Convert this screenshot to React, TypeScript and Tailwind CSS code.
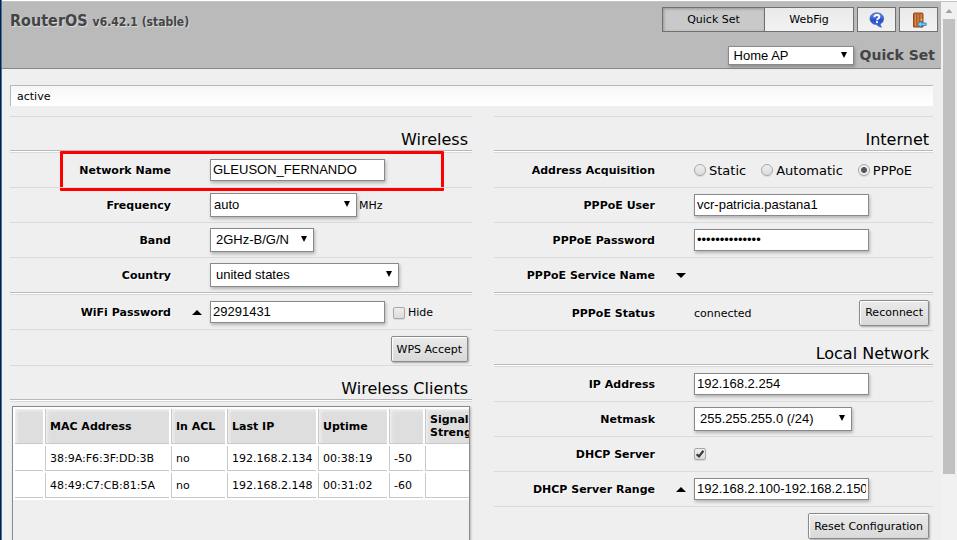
import type { ReactNode } from "react";

const inputClass =
  "h-[22px] w-[175px] shrink-0 border border-[#8a8a8a] bg-white px-[2px] pb-px text-[13px] leading-4 font-['Liberation_Sans',Arial,sans-serif] shadow-[1px_2px_3px_rgba(0,0,0,0.25)] outline-none";

function Rule() {
  return <div className="h-[2px] border-t border-[#b8b8b8] bg-white" />;
}

function Heading({ children }: { children: ReactNode }) {
  return (
    <>
      <h2 className="flex h-[34px] items-center justify-end border-t border-[#dadada] pt-3 pr-1 text-base leading-5">
        {children}
      </h2>
      <Rule />
    </>
  );
}

function Toggle({ open, name }: { open: boolean; name: string }) {
  return (
    <button type="button" aria-label={name} aria-expanded={open} className="p-0">
      <svg width="10" height="5" viewBox="0 0 10 5" className="block">
        <path d={open ? "M5 0L10 5H0Z" : "M0 0H10L5 5Z"} fill="#000" />
      </svg>
    </button>
  );
}

interface RowProps {
  label: string;
  id?: string;
  tall?: boolean;
  toggle?: "open" | "closed";
  marked?: boolean;
  children?: ReactNode;
}

function Row({ label, id, tall, toggle, marked, children }: RowProps) {
  const labelClass =
    "w-[161px] shrink-0 pt-[2px] text-right text-[11px] leading-4 font-bold [text-shadow:1px_1px_1px_#fff]";
  return (
    <div
      className={`relative flex items-center border-t border-[#dadada] ${tall ? "h-9" : "h-[35px]"}`}
    >
      {id ? (
        <label htmlFor={id} className={labelClass}>
          {label}
        </label>
      ) : (
        <span className={labelClass}>{label}</span>
      )}
      <div className="flex w-[39px] shrink-0 justify-end pr-2">
        {toggle && <Toggle open={toggle === "open"} name={`Toggle ${label}`} />}
      </div>
      <div className="flex min-w-0 flex-1 items-center">{children}</div>
      {marked && (
        <div className="pointer-events-none absolute -top-[2px] right-7 -bottom-1 left-[50px] rounded-[1px] border-3 border-[#ff0000]" />
      )}
    </div>
  );
}

interface SelectProps {
  id: string;
  value: string;
  size: string;
  pad?: string;
  label?: string;
}

function Select({ id, value, size, pad = "pl-[5px]", label }: SelectProps) {
  return (
    <div className={`relative shrink-0 ${size}`}>
      <select
        id={id}
        aria-label={label}
        defaultValue={value}
        className={`block h-full w-full appearance-none border border-[#8a8a8a] bg-white text-[13px] leading-4 font-['Liberation_Sans',Arial,sans-serif] shadow-[1px_2px_3px_rgba(0,0,0,0.25)] outline-none ${pad}`}
      >
        <option>{value}</option>
      </select>
      <svg
        width="6"
        height="6"
        viewBox="0 0 6 6"
        className="pointer-events-none absolute top-1/2 right-[7px] -mt-1"
      >
        <path d="M0 0H6L3 6Z" fill="#000" />
      </svg>
    </div>
  );
}

function Check({ id, checked }: { id: string; checked?: boolean }) {
  return (
    <span className="relative block size-3">
      <input
        id={id}
        type="checkbox"
        defaultChecked={checked}
        className="block size-3 appearance-none rounded-[2px] border border-[#a8a8a8] bg-linear-to-b from-[#eee] to-[#dcdcdc] shadow-[0_1px_1px_rgba(0,0,0,0.1)]"
      />
      {checked && (
        <svg
          viewBox="0 0 12 12"
          className="pointer-events-none absolute inset-0 size-3"
          fill="none"
          stroke="#3c3c3c"
          strokeWidth="2.2"
        >
          <path d="M2.6 6.2L5 8.4L9.4 2.8" />
        </svg>
      )}
    </span>
  );
}

function Radio({ id, label, checked }: { id: string; label: string; checked?: boolean }) {
  return (
    <div className="flex items-center gap-[3px]">
      <input
        id={id}
        type="radio"
        name="acquisition"
        defaultChecked={checked}
        className="block size-3 appearance-none rounded-full border border-[#a8a8a8] bg-linear-to-b from-[#eee] to-[#dcdcdc] shadow-[0_1px_1px_rgba(0,0,0,0.1)] checked:bg-[radial-gradient(circle,#555_0_2.5px,transparent_3.5px)]"
      />
      <label htmlFor={id} className="pt-[2px] text-[13px] leading-4">
        {label}
      </label>
    </div>
  );
}

function Button({ children }: { children: ReactNode }) {
  return (
    <button
      type="button"
      className="h-[26px] rounded-[2px] border border-[#8a8a8a] bg-linear-to-b from-[#eaeaea] to-[#d9d9d9] px-[5px] pt-px text-[11px] leading-4 whitespace-nowrap shadow-[1px_1px_2px_rgba(0,0,0,0.3),inset_1px_1px_1px_#fff]"
    >
      {children}
    </button>
  );
}

function HelpIcon() {
  return (
    <svg width="16" height="16" viewBox="0 0 16 16">
      <defs>
        <linearGradient id="bubble" x1="0" y1="0" x2="0" y2="1">
          <stop offset="0" stopColor="#6f92ea" />
          <stop offset="0.5" stopColor="#2a50cc" />
          <stop offset="1" stopColor="#3f6be0" />
        </linearGradient>
      </defs>
      <path
        d="M7.8 0.8C11.8 0.8 14.6 3.2 14.6 6.6C14.6 9.2 13.2 11.2 11.2 12C11.2 13.4 11.8 14.4 12.6 15.2C10.4 15 8.6 14 7.8 12.6C3.8 12.6 1 10 1 6.6C1 3.2 3.8 0.8 7.8 0.8Z"
        fill="url(#bubble)"
        stroke="#2a48b4"
        strokeWidth="0.6"
      />
      <path
        d="M5.4 5.2C5.5 3.7 6.5 3 7.9 3C9.4 3 10.4 3.8 10.4 5C10.4 6.6 8 6.5 8 8.3"
        fill="none"
        stroke="#fff"
        strokeWidth="1.8"
      />
      <rect x="7" y="9.2" width="2" height="1.8" fill="#fff" />
    </svg>
  );
}

function DoorIcon() {
  return (
    <svg width="16" height="16" viewBox="0 0 16 16">
      <path d="M2.5 15V2C2.5 1.4 2.9 1 3.5 1H11C11.6 1 12 1.4 12 2V15Z" fill="#c06a30" stroke="#95481a" />
      <path d="M4.5 2.5V14M7.2 2.5V14M10 2.5V14" stroke="#d98a50" />
      <path d="M5.8 2.5V14M8.6 2.5V14" stroke="#9c501f" strokeWidth="0.6" />
      <rect x="9.8" y="7" width="1.4" height="1.6" fill="#f3d27a" />
      <path
        d="M6.6 12.2L10.2 8.8V11H15.2V13.4H10.2V15.6Z"
        fill="#7accf4"
        stroke="#1f7cba"
        strokeWidth="0.8"
      />
    </svg>
  );
}

const clients = [
  ["", "38:9A:F6:3F:DD:3B", "no", "192.168.2.134", "00:38:19", "-50", ""],
  ["", "48:49:C7:CB:81:5A", "no", "192.168.2.148", "00:31:02", "-60", ""],
];

const columns = ["", "MAC Address", "In ACL", "Last IP", "Uptime", "", "Signal Strength"];

function ClientsTable() {
  return (
    <div className="mt-1 mr-[2px] ml-[2px] h-[400px] overflow-hidden border border-[#8a8a8a] shadow-[1px_1px_2px_rgba(0,0,0,0.25)]">
      <table className="w-[486px] table-fixed border-separate border-spacing-[2px] bg-white text-[11px] leading-[13px]">
        <colgroup>
          <col className="w-7" />
          <col className="w-[124px]" />
          <col className="w-[54px]" />
          <col className="w-[89px]" />
          <col className="w-[69px]" />
          <col className="w-[34px]" />
          <col />
        </colgroup>
        <thead>
          <tr>
            {columns.map((name, i) => (
              <th
                key={i}
                className="h-[35px] border-b border-l border-[#c8c8c8] bg-[#dedede] p-0 pl-1 text-left font-bold shadow-[inset_2px_2px_3px_#efefef] first:border-l-0"
              >
                {name}
              </th>
            ))}
          </tr>
        </thead>
        <tbody>
          {clients.map((row) => (
            <tr key={row[1]}>
              {row.map((cell, i) => (
                <td
                  key={i}
                  className="h-[25px] border-b border-l border-[#c8c8c8] p-0 pl-1 whitespace-nowrap first:border-l-0"
                >
                  {cell}
                </td>
              ))}
            </tr>
          ))}
        </tbody>
      </table>
    </div>
  );
}

function Header() {
  const tool =
    "flex h-[25px] items-center justify-center border border-[#707070] bg-linear-to-b from-[#eaeaea] to-[#f2f2f2] text-[11px] leading-4";
  return (
    <header className="flex justify-between border-b border-[#888] bg-[#bababa] pt-[5px] pr-[3px] pb-[3px] pl-2">
      <h1 className="pt-1 text-base leading-5 font-bold text-[#444] font-['DejaVu_Sans_Condensed','DejaVu_Sans',sans-serif] [text-shadow:1px_1px_1px_#ddd]">
        RouterOS <small className="text-xs leading-5">v6.42.1 (stable)</small>
      </h1>
      <div className="flex flex-col gap-[14px]">
        <div className="flex justify-end gap-[3px]">
          <nav className="flex">
            <button
              type="button"
              className="h-[25px] w-[103px] border border-[#707070] bg-[#c9c9c9] pt-px text-[11px] leading-4 shadow-[inset_1px_1px_3px_rgba(0,0,0,0.25)]"
            >
              Quick Set
            </button>
            <button type="button" className={`${tool} -ml-px w-[90px] pt-px`}>
              WebFig
            </button>
          </nav>
          <button type="button" aria-label="Help" className={`${tool} w-[39px]`}>
            <HelpIcon />
          </button>
          <button type="button" aria-label="Log out" className={`${tool} w-[39px]`}>
            <DoorIcon />
          </button>
        </div>
        <div className="flex items-center justify-end gap-[6px] pr-[3px]">
          <Select id="mode" label="Mode" value="Home AP" size="h-[19px] w-[126px]" />
          <h2 className="text-sm leading-[19px] font-bold text-[#444]">Quick Set</h2>
        </div>
      </div>
    </header>
  );
}

function Scrollbar() {
  return (
    <div aria-hidden="true" className="flex w-4 shrink-0 flex-col bg-[#f1f1f1] px-[2px]">
      <svg viewBox="0 0 12 17" className="h-[17px] w-3 shrink-0">
        <path d="M6 7L9.5 11H2.5Z" fill="#a3a3a3" />
      </svg>
      <div className="h-[84.5%] bg-[#c1c1c1]" />
    </div>
  );
}

export default function App() {
  return (
    <div className="flex h-screen overflow-hidden border-l border-[#1c1c1c] bg-[#efefef] font-['DejaVu_Sans',Verdana,sans-serif] text-black">
      <div className="flex min-w-0 flex-1 flex-col border-l border-[#2b7bc4]">
        <div className="h-[2px] shrink-0 border-b border-[#bcc4c4] bg-white" />
        <div className="flex min-h-0 flex-1">
          <div className="min-w-0 flex-1 overflow-hidden">
            <Header />
            <main className="px-2 pt-4">
              <div
                role="status"
                className="mb-[10px] h-[21px] border-t border-l border-[#b8b8b8] bg-linear-to-b from-[#f7f7f7] to-white pt-px pl-[6px] text-[11px] leading-5"
              >
                active
              </div>
              <div className="grid grid-cols-[462fr_439fr] gap-[22px]">
                <section className="min-w-0">
                  <Heading>Wireless</Heading>
                  <Row label="Network Name" id="ssid" marked>
                    <input id="ssid" defaultValue="GLEUSON_FERNANDO" className={inputClass} />
                  </Row>
                  <Row label="Frequency" id="frequency">
                    <Select id="frequency" value="auto" size="h-6 w-[147px]" pad="pl-[3px]" />
                    <span className="ml-[2px] pt-[2px] text-[11px] leading-4">MHz</span>
                  </Row>
                  <Row label="Band" id="band">
                    <Select id="band" value="2GHz-B/G/N" size="h-6 w-[104px]" />
                  </Row>
                  <Row label="Country" id="country">
                    <Select id="country" value="united states" size="h-6 w-[189px]" />
                  </Row>
                  <Rule />
                  <Row label="WiFi Password" id="wifi" toggle="open">
                    <input id="wifi" defaultValue="29291431" className={inputClass} />
                    <div className="ml-2 flex items-center gap-[3px] pt-[2px]">
                      <Check id="hide" />
                      <label htmlFor="hide" className="text-[11px] leading-4">
                        Hide
                      </label>
                    </div>
                  </Row>
                  <div className="flex h-9 items-center justify-end border-t border-[#dadada] pt-[3px] pr-1">
                    <Button>WPS Accept</Button>
                  </div>
                  <Heading>Wireless Clients</Heading>
                  <div className="border-t border-[#dadada]">
                    <ClientsTable />
                  </div>
                </section>
                <section className="min-w-0">
                  <Heading>Internet</Heading>
                  <Row label="Address Acquisition">
                    <div role="radiogroup" aria-label="Address Acquisition" className="flex gap-[15px]">
                      <Radio id="static" label="Static" />
                      <Radio id="automatic" label="Automatic" />
                      <Radio id="pppoe" label="PPPoE" checked />
                    </div>
                  </Row>
                  <Row label="PPPoE User" id="user">
                    <input id="user" defaultValue="vcr-patricia.pastana1" className={inputClass} />
                  </Row>
                  <Row label="PPPoE Password" id="password">
                    <input
                      id="password"
                      type="password"
                      defaultValue="abcdefghijklmn"
                      className={inputClass}
                    />
                  </Row>
                  <Row label="PPPoE Service Name" toggle="closed" />
                  <Rule />
                  <Row label="PPPoE Status" tall>
                    <div className="flex flex-1 items-center justify-between pr-1">
                      <span className="pt-[2px] text-[11px] leading-4">connected</span>
                      <Button>Reconnect</Button>
                    </div>
                  </Row>
                  <Heading>Local Network</Heading>
                  <Row label="IP Address" id="ip">
                    <input id="ip" defaultValue="192.168.2.254" className={inputClass} />
                  </Row>
                  <Row label="Netmask" id="netmask">
                    <Select id="netmask" value="255.255.255.0 (/24)" size="h-6 w-[158px]" />
                  </Row>
                  <Row label="DHCP Server" id="dhcp">
                    <Check id="dhcp" checked />
                  </Row>
                  <Row label="DHCP Server Range" id="range" toggle="open">
                    <input
                      id="range"
                      defaultValue="192.168.2.100-192.168.2.150"
                      className={inputClass}
                    />
                  </Row>
                  <div className="flex h-9 items-center justify-end border-t border-[#dadada] pt-[3px] pr-1">
                    <Button>Reset Configuration</Button>
                  </div>
                </section>
              </div>
            </main>
          </div>
          <Scrollbar />
        </div>
      </div>
    </div>
  );
}
